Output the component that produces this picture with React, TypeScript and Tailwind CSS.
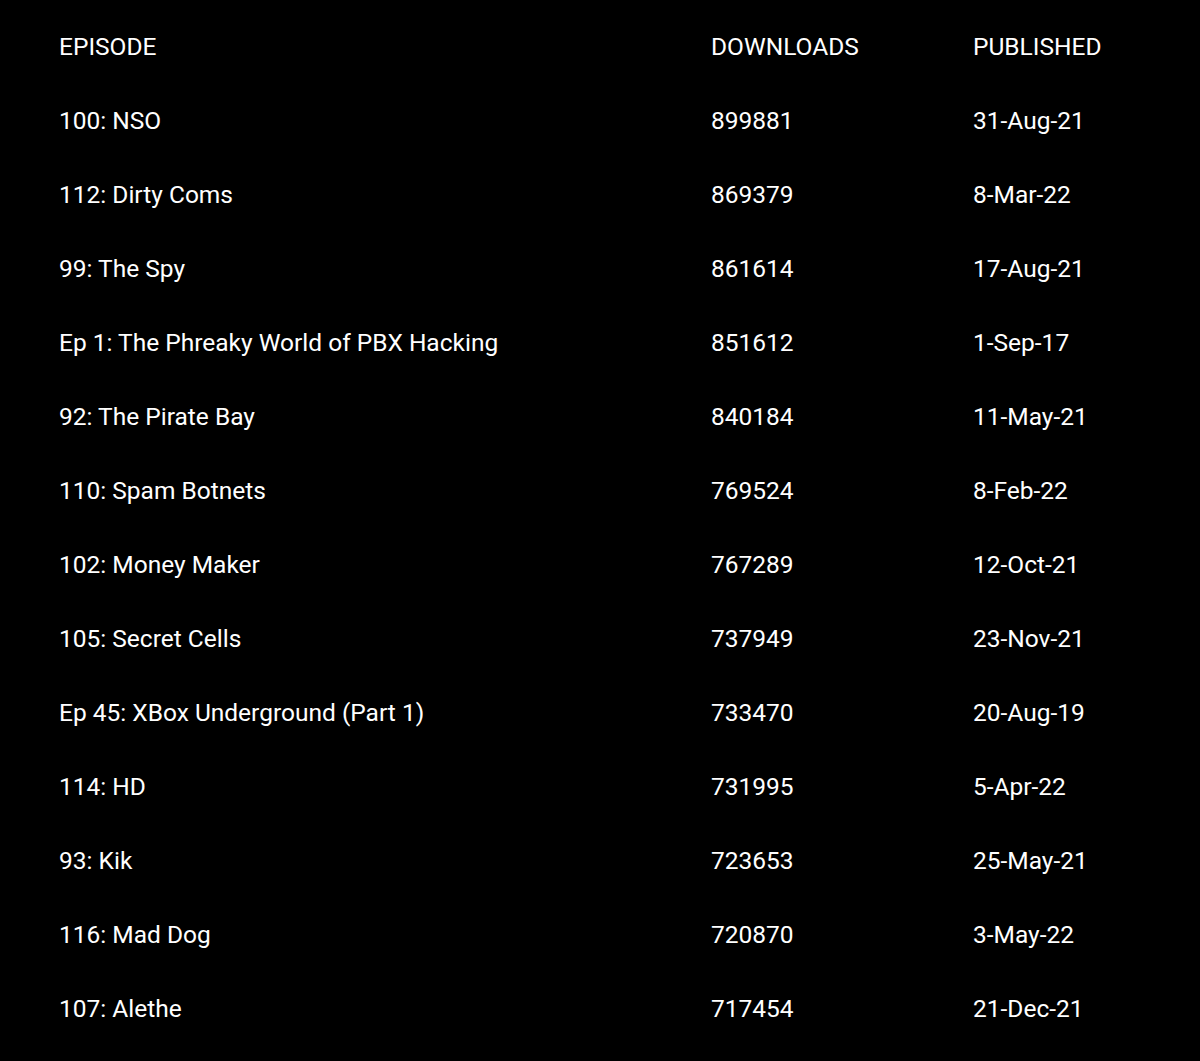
import { Fragment } from "react";

const rows: [string, string, string][] = [
  ["100: NSO", "899881", "31-Aug-21"],
  ["112: Dirty Coms", "869379", "8-Mar-22"],
  ["99: The Spy", "861614", "17-Aug-21"],
  ["Ep 1: The Phreaky World of PBX Hacking", "851612", "1-Sep-17"],
  ["92: The Pirate Bay", "840184", "11-May-21"],
  ["110: Spam Botnets", "769524", "8-Feb-22"],
  ["102: Money Maker", "767289", "12-Oct-21"],
  ["105: Secret Cells", "737949", "23-Nov-21"],
  ["Ep 45: XBox Underground (Part 1)", "733470", "20-Aug-19"],
  ["114: HD", "731995", "5-Apr-22"],
  ["93: Kik", "723653", "25-May-21"],
  ["116: Mad Dog", "720870", "3-May-22"],
  ["107: Alethe", "717454", "21-Dec-21"],
];

export default function App() {
  return (
    <div
      className="w-[1200px] h-[1061px] bg-black text-white pt-[10px] pl-[59px]"
      style={{ fontFamily: "Roboto, 'Open Sans', sans-serif" }}
    >
      <div className="grid grid-cols-[652px_262px_1fr] auto-rows-[74px] text-[24.5px] leading-none">
        <div className="flex items-center">EPISODE</div>
        <div className="flex items-center">DOWNLOADS</div>
        <div className="flex items-center">PUBLISHED</div>
        {rows.map((r) => (
          <Fragment key={r[0]}>
            <div className="flex items-center">{r[0]}</div>
            <div className="flex items-center">{r[1]}</div>
            <div className="flex items-center">{r[2]}</div>
          </Fragment>
        ))}
      </div>
    </div>
  );
}
